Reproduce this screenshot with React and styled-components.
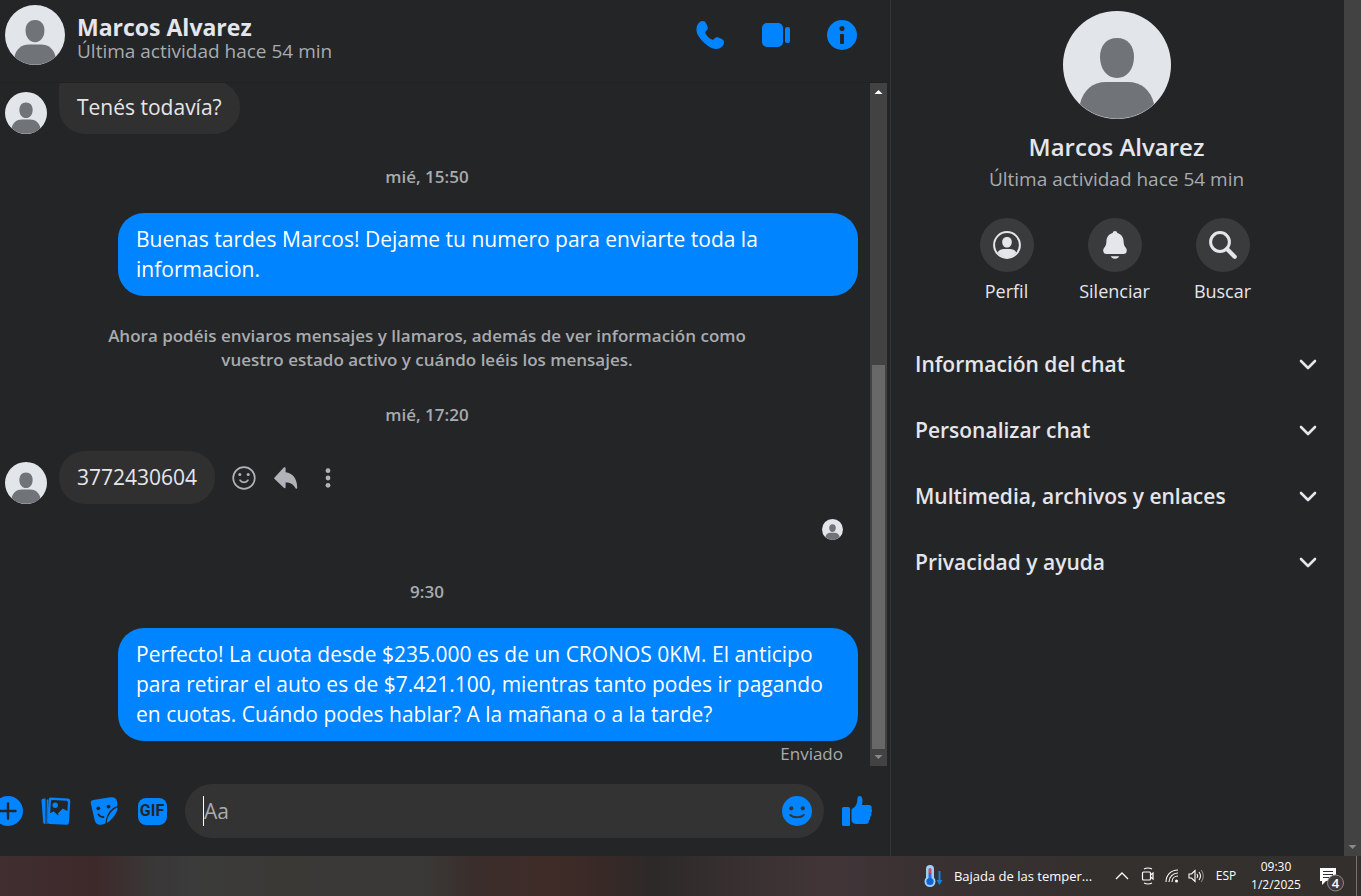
import React from "react";
import styled, { createGlobalStyle } from "styled-components";

const GlobalStyle = createGlobalStyle`
  * {
    box-sizing: border-box;
  }

  body {
    margin: 0;
    background: #242526;
    color: #e4e6eb;
    font-family: "Open Sans", "Noto Sans", sans-serif;
  }

  button, input {
    font-family: inherit;
    color: inherit;
    border: 0;
    padding: 0;
    background: none;
  }

  button {
    cursor: pointer;
  }

  h1, h2, p {
    margin: 0;
  }

  svg {
    display: block;
    flex: none;
  }
`;

const Page = styled.div`
  display: flex;
  flex-direction: column;
  height: 100vh;
  overflow: hidden;
`;

const Main = styled.main`
  display: flex;
  flex: 1;
  min-height: 0;
`;

const Chat = styled.section`
  display: flex;
  flex-direction: column;
  flex: 1;
  min-width: 0;
  overflow: hidden;
  border-right: 1px solid #343536;
`;

const Header = styled.header`
  display: flex;
  align-items: flex-start;
  justify-content: space-between;
  padding: 5px 27px 17px 5px;
  border-bottom: 1px solid #202122;
`;

const Contact = styled.div`
  display: flex;
  align-items: center;
  gap: 12px;
`;

const ContactText = styled.div`
  padding-top: 6px;
`;

const Name = styled.h1`
  font-size: 23px;
  line-height: 26px;
  font-weight: 700;
`;

const Status = styled.p`
  font-size: 19px;
  line-height: 22px;
  color: #a8abaf;
`;

const HeaderActions = styled.div`
  display: flex;
  align-items: center;
  gap: 24px;
  height: 60px;
`;

const IconButton = styled.button`
  display: flex;
  align-items: center;
  justify-content: center;
  flex: none;
  width: ${(props) => props.$size || 42}px;
  height: ${(props) => props.$size || 42}px;
  color: ${(props) => props.$color || "#0084ff"};
`;

const Body = styled.div`
  display: flex;
  flex: 1;
  min-height: 0;
  padding-right: 3px;
`;

const Messages = styled.div`
  display: flex;
  flex-direction: column;
  justify-content: flex-end;
  flex: 1;
  min-width: 0;
  overflow: hidden;
  padding: 0 12px 0 5px;
`;

const Received = styled.div`
  display: flex;
  align-items: flex-end;
  gap: 12px;
`;

const Bubble = styled.p`
  padding: 11px 18px 12px;
  border-radius: ${(props) => (props.$grouped ? "6px 26px 26px 26px" : "26px")};
  background: #303030;
  font-size: 21px;
  line-height: 30px;
`;

const Sent = styled(Bubble)`
  align-self: flex-end;
  width: 740px;
  max-width: 88%;
  background: #0084ff;
  color: #fff;
`;

const MessageActions = styled.div`
  display: flex;
  align-items: center;
  height: 53px;
  margin-left: -4px;
`;

const Time = styled.p`
  margin: 31px 9px 24px 0;
  font-size: 17px;
  line-height: 24px;
  font-weight: 600;
  text-align: center;
  color: #a8abaf;
`;

const Notice = styled(Time)`
  max-width: 650px;
  margin: 28px auto 0;
  padding-right: 9px;
`;

const Seen = styled.div`
  display: flex;
  justify-content: flex-end;
  padding: 15px 15px 9px 0;
`;

const Delivery = styled.p`
  padding-right: 15px;
  font-size: 17px;
  line-height: 25px;
  text-align: right;
  color: #a8abaf;
`;

const ScrollTrack = styled.div`
  display: flex;
  flex-direction: column;
  align-items: center;
  justify-content: space-between;
  flex: none;
  width: 17px;
  background: #424242;
`;

const ScrollThumb = styled.div`
  flex: 1;
  width: 13px;
  margin-top: 265px;
  background: #686868;
`;

const Composer = styled.form`
  display: flex;
  align-items: center;
  margin: 18px 9px 18px -16px;
`;

const Field = styled.div`
  display: flex;
  align-items: center;
  flex: 1;
  min-width: 0;
  height: 54px;
  margin: 0 9px;
  padding: 0 6px 0 18px;
  border-radius: 27px;
  background: #333334;
`;

const TextInput = styled.input`
  flex: 1;
  min-width: 0;
  height: 30px;
  border-left: 1px solid #fff;
  font-size: 21px;
  outline: 0;

  &::placeholder {
    color: #a8abaf;
    opacity: 1;
  }
`;

const Info = styled.aside`
  flex: none;
  width: 453px;
  padding-top: 11px;
`;

const Profile = styled.div`
  display: flex;
  flex-direction: column;
  align-items: center;
  padding-right: 2px;
`;

const ProfileName = styled.h2`
  margin-top: 12px;
  font-size: 24px;
  line-height: 32px;
  font-weight: 600;
`;

const ProfileStatus = styled(Status)`
  line-height: 32px;
`;

const Shortcuts = styled.div`
  display: flex;
  justify-content: center;
  padding: 23px 6px 0 0;
`;

const Shortcut = styled.button`
  display: flex;
  flex-direction: column;
  align-items: center;
  gap: 6px;
  width: 108px;
  font-size: 18px;
  line-height: 26px;
`;

const Round = styled.span`
  display: flex;
  align-items: center;
  justify-content: center;
  width: 54px;
  height: 54px;
  border-radius: 50%;
  background: #3a3b3c;
`;

const Sections = styled.div`
  padding: 27px 27px 0 24px;
`;

const SectionButton = styled.button`
  display: flex;
  align-items: center;
  justify-content: space-between;
  width: 100%;
  height: 66px;
  font-size: 21px;
  line-height: 30px;
  font-weight: 600;
  text-align: left;
`;

const Taskbar = styled.footer`
  display: flex;
  align-items: center;
  justify-content: flex-end;
  flex: none;
  height: 40px;
  background: linear-gradient(
    90deg,
    #402e30 0%,
    #3e292a 7%,
    #3a3737 11%,
    #3a3b3a 14%,
    #3b3936 20%,
    #3a3937 31%,
    #3a2d2b 35%,
    #3f2c28 40%,
    #392926 44%,
    #2d2929 48%,
    #383030 54%,
    #413538 61%,
    #3a3132 67%,
    #34302e 80%,
    #322f2d 100%
  );
  color: #fff;
  font-size: 13px;
  line-height: 18px;
`;

const TrayButton = styled.button`
  display: flex;
  align-items: center;
  justify-content: center;
  gap: ${(props) => props.$gap || 0}px;
  flex: none;
  width: ${(props) => props.$width}px;
  height: 40px;
  font-size: ${(props) => props.$font || 13}px;
  line-height: 18px;
  white-space: nowrap;
`;

const Desktop = styled.button`
  width: 5px;
  height: 40px;
  border-left: 1px solid #77706c;
`;

const Avatar = ({ size }) => (
  <svg width={size} height={size} viewBox="0 0 108 108" role="img" aria-label="Marcos Alvarez">
    <circle cx="54" cy="54" r="54" fill="#e2e5ea" />
    <path
      d="M54 27c11 0 17 8 17 19 0 12-7 21-17 21s-17-9-17-21c0-11 6-19 17-19Z"
      fill="#707378"
    />
    <path
      d="M17 93C20 79 30 71 43 71h22c13 0 23 8 26 22A54 54 0 0 1 17 93Z"
      fill="#707378"
    />
  </svg>
);

const PhoneIcon = () => (
  <svg width="28" height="28" viewBox="0 0 28 28" fill="currentColor">
    <path d="M1 5C2 2 4 0 7 0c1.400 0 2.200.8 3 2.200l1.400 3c.8 1.900.4 3.300-1 4.500-1.200 1-1.400 1.800-.6 3.200 1.200 2.200 3.200 4.200 5.400 5.400 1.400.8 2.200.6 3.200-.6 1.200-1.400 2.600-1.800 4.500-1l3 1.400C27.200 19 28 19.800 28 21.200c0 3-2 5-5 6.200-3 1.100-6.600.4-10.600-2.200C8.600 22.700 5.200 19.400 2.800 15.600.2 11.600 0 8 1 5Z" />
  </svg>
);

const VideoIcon = () => (
  <svg width="28" height="24" viewBox="0 0 28 24" fill="currentColor">
    <rect width="21" height="24" rx="5" />
    <rect x="23" y="4" width="5" height="16" rx="2" />
  </svg>
);

const InfoIcon = () => (
  <svg width="30" height="30" viewBox="0 0 30 30">
    <circle cx="15" cy="15" r="15" fill="currentColor" />
    <circle cx="15" cy="8.500" r="2.500" fill="#242526" />
    <path d="M13.500 14.500h3V23.500h-3Z" fill="#242526" stroke="#242526" strokeLinejoin="round" />
  </svg>
);

const SmileOutline = () => (
  <svg width="24" height="24" viewBox="0 0 24 24" fill="none" stroke="currentColor" strokeLinecap="round">
    <circle cx="12" cy="12" r="10.800" strokeWidth="1.700" />
    <path d="M8 14.200c1.600 2.800 6.400 2.800 8 0" strokeWidth="1.700" />
    <circle cx="7.800" cy="8.500" r="1.500" fill="currentColor" stroke="none" />
    <circle cx="16.200" cy="8.500" r="1.500" fill="currentColor" stroke="none" />
  </svg>
);

const ReplyIcon = () => (
  <svg width="24" height="24" viewBox="0 0 24 24" fill="currentColor">
    <path d="M.6 11.400 9.800 1.600c.8-.8 1.800-.4 1.800.7v3.900c7 .8 11.600 6.400 11.600 15.200 0 1.600-1.300 1.800-2 .4-1.900-3.800-5-5.200-9.600-5.300V21c0 1.200-1 1.600-1.800.8L.6 13c-.6-.6-.6-1 0-1.600Z" />
  </svg>
);

const DotsIcon = () => (
  <svg width="24" height="24" viewBox="0 0 24 24" fill="currentColor">
    <circle cx="12" cy="4.700" r="2.400" />
    <circle cx="12" cy="12" r="2.400" />
    <circle cx="12" cy="19.300" r="2.400" />
  </svg>
);

const PlusIcon = () => (
  <svg width="30" height="30" viewBox="0 0 30 30">
    <circle cx="15" cy="15" r="15" fill="currentColor" />
    <path d="M15 7.500v15M7.500 15h15" stroke="#242526" strokeWidth="2.400" strokeLinecap="round" />
  </svg>
);

const PhotoIcon = () => (
  <svg width="30" height="30" viewBox="0 0 30 30">
    <path d="M.5 4.500Q.4 3 2 2.800L4.600 2.500 4.400 28 3.600 28.100Q2.400 28 2.200 26.600Z" fill="currentColor" />
    <path d="M6.400 3.500 6 28" stroke="currentColor" strokeWidth="1.200" />
    <path
      d="M10 1.600 27 2.600q2.400.2 2.300 2.600L28 26.600q-.2 2.300-2.600 2.200L8.600 28q-2.300-.2-2.200-2.500L7.500 4q.2-2.500 2.500-2.400Z"
      fill="currentColor"
    />
    <path
      d="M9.200 17.200 9.900 5q.1-1.200 1.400-1.100l14.200.8q1.500.1 1.400 1.500L26.400 15l-4.600-2.600-5 5.200 1 1.600-1.600-.4-3.600-3.600Z"
      fill="#242526"
    />
    <circle cx="14.200" cy="9.200" r="2.700" fill="currentColor" />
  </svg>
);

const StickerIcon = () => (
  <svg width="28" height="30" viewBox="0 0 28 30">
    <path
      d="M.8 7.200Q.4 4.400 3.200 3.900L20.500 1.200q6-.6 6.600 4.600l.2 4.400c-6.300 1.400-11.300 8.200-11.800 17.200l-3 1.200q-6.800 1.400-8-5Z"
      fill="currentColor"
    />
    <path d="M27.500 12.600c-.2 3.400-4.400 10.600-9.700 13.800-.8.500-1.200 0-1-.8 1-6 4.800-11.300 9.400-13.500.8-.4 1.400-.3 1.300.5Z" fill="currentColor" />
    <circle cx="8.300" cy="12.300" r="1.900" fill="#242526" />
    <circle cx="18.500" cy="10.600" r="1.900" fill="#242526" />
    <path d="M8.500 18.500c1.400 2 3 2.800 5 2.500" stroke="#242526" strokeWidth="1.800" fill="none" strokeLinecap="round" />
  </svg>
);

const Gif = styled.span`
  display: flex;
  align-items: center;
  justify-content: center;
  width: 29px;
  height: 27px;
  border-radius: 8px;
  background: #0084ff;
  color: #242526;
  font: 700 16px/20px Roboto, sans-serif;
`;

const SmileIcon = () => (
  <svg width="30" height="30" viewBox="0 0 30 30">
    <circle cx="15" cy="15" r="15" fill="currentColor" />
    <circle cx="9.200" cy="12.300" r="2.100" fill="#333334" />
    <circle cx="20.800" cy="12.300" r="2.100" fill="#333334" />
    <path d="M8.200 19c3 3 10.600 3 13.600 0" stroke="#333334" strokeWidth="2" fill="none" strokeLinecap="round" />
  </svg>
);

const LikeIcon = () => (
  <svg width="30" height="30" viewBox="0 0 30 30" fill="currentColor">
    <rect y="11" width="8" height="19" rx="1.500" />
    <path d="M9.500 14.500c0-1.300.6-2 1.700-2.500 3-1.500 4-4.800 4.200-9C15.500 1 16.200 0 17.500 0 20 0 20.600 2.400 20.500 5c-.1 2-.5 3.400-.5 4h7c2.200 0 3.300 2 2.400 3.800 1 1.400.8 3-.3 4.200.7 1.600.3 3-1 4 .3 1.600-.2 2.700-1.200 3.500.2 2-1 3.500-3.200 3.500H15c-3.400 0-5.500-1.500-5.500-4Z" />
  </svg>
);

const ProfileIcon = () => (
  <svg width="28" height="28" viewBox="0 0 28 28">
    <circle cx="14" cy="14" r="12.900" fill="none" stroke="currentColor" strokeWidth="2" />
    <path d="M14 6c3.200 0 4.800 2.300 4.800 5 0 3.100-2 5.600-4.800 5.600S9.200 14.100 9.200 11C9.200 8.300 10.800 6 14 6Z" fill="currentColor" />
    <path d="M4.500 21.500C6.300 18.900 8.500 18 11 18h6c2.500 0 4.700.9 6.500 3.500A12 12 0 0 1 4.500 21.500Z" fill="currentColor" />
  </svg>
);

const BellIcon = () => (
  <svg width="28" height="28" viewBox="0 0 28 28" fill="currentColor">
    <path d="M14 0c1.300 0 2.100.8 2.300 1.900 4 1 6.200 4.200 6.300 8.700.1 3.200.8 4.500 2.200 6.200 1 1.300 1.200 2.300.8 4-.4 1.500-1.500 2.200-3 2.200H5.400c-1.500 0-2.600-.7-3-2.200-.4-1.700-.2-2.700.8-4 1.400-1.700 2.100-3 2.200-6.200C5.500 6.100 7.700 2.900 11.700 1.900 11.900.8 12.700 0 14 0Z" />
    <path d="M9.800 25.200h8.400c-.6 1.600-2 2.500-4.200 2.500s-3.600-.9-4.200-2.500Z" />
  </svg>
);

const SearchIcon = () => (
  <svg width="28" height="28" viewBox="0 0 28 28" fill="none" stroke="currentColor">
    <circle cx="11" cy="11" r="9.400" strokeWidth="3" />
    <path d="m18 18 7.700 7.700" strokeWidth="4.200" strokeLinecap="round" />
  </svg>
);

const ChevronIcon = () => (
  <svg width="18" height="18" viewBox="0 0 18 18" fill="none" stroke="currentColor">
    <path d="m2 6 7 7 7-7" strokeWidth="2.600" strokeLinecap="round" strokeLinejoin="round" />
  </svg>
);

const Arrow = ({ up, color }) => (
  <svg width="17" height="17" viewBox="0 0 17 17" fill={color}>
    <path d={up ? "M4.500 11h8l-4-4Z" : "M4.500 6h8l-4 4Z"} />
  </svg>
);

const ThermometerIcon = () => (
  <svg width="20" height="24" viewBox="0 0 20 24">
    <rect x="2" y="1" width="8" height="17" rx="4" fill="#9bd0f7" />
    <circle cx="6" cy="17.500" r="5.500" fill="#9bd0f7" />
    <rect x="4.500" y="4" width="3" height="6" rx="1.500" fill="#d8456b" />
    <path d="M4.500 9h3v8h-3Z" fill="#3a66d8" />
    <circle cx="6" cy="17.500" r="3.600" fill="#0f63d6" />
    <path d="M15.500 7v11" stroke="#1180e0" strokeWidth="2" />
    <path d="M12.500 16h6l-3 5Z" fill="#1180e0" />
  </svg>
);

const UpIcon = () => (
  <svg width="14" height="14" viewBox="0 0 14 14" fill="none" stroke="#fff" strokeWidth="1.300">
    <path d="m1 10 6-6 6 6" />
  </svg>
);

const MeetIcon = () => (
  <svg width="14" height="18" viewBox="0 0 14 18" fill="none" stroke="#fff" strokeWidth="1.200">
    <rect x="1.500" y="5" width="8" height="8" rx="1" />
    <path d="m9.500 8 2.500-2v6l-2.500-2M3 2q4-2 8 0M3 16q4 2 8 0" />
  </svg>
);

const WifiIcon = () => (
  <svg width="14" height="14" viewBox="0 0 14 14" fill="none" stroke="#fff" strokeWidth="1.100">
    <path d="M1 13C1 6 6 1 13 1M4 13c0-5 4-9 9-9M7 13c0-3.500 2.500-6 6-6" />
    <circle cx="11.500" cy="12" r="1.500" fill="#fff" stroke="none" />
  </svg>
);

const VolumeIcon = () => (
  <svg width="17" height="14" viewBox="0 0 17 14" fill="none" stroke="#fff" strokeWidth="1.100">
    <path d="M1 5h2.500L7 1.500v11L3.500 9H1ZM9 5q1.500 2 0 4M11 3q3 4 0 8" />
    <path d="M13.300 1q4 6 0 12" stroke="#8b8785" />
  </svg>
);

const NoticesIcon = () => (
  <svg width="26" height="34" viewBox="0 -8 26 34">
    <path d="M1 1h16v13H7l-4 4v-4H1Z" fill="#fff" />
    <path d="M4 4.500h10M4 7.500h10M4 10.500h6" stroke="#34302e" strokeWidth="1.200" />
    <circle cx="16.500" cy="16" r="8" fill="#403c3b" stroke="#8d8987" />
    <text x="16.500" y="21" fill="#fff" fontSize="13" fontWeight="600" textAnchor="middle">4</text>
  </svg>
);

const shortcuts = [
  { label: "Perfil", Icon: ProfileIcon },
  { label: "Silenciar", Icon: BellIcon },
  { label: "Buscar", Icon: SearchIcon },
];

const sections = [
  "Información del chat",
  "Personalizar chat",
  "Multimedia, archivos y enlaces",
  "Privacidad y ayuda",
];

const App = () => {
  return (
    <Page>
      <GlobalStyle />
      <Main>
        <Chat>
          <Header>
            <Contact>
              <Avatar size={60} />
              <ContactText>
                <Name>Marcos Alvarez</Name>
                <Status>Última actividad hace 54 min</Status>
              </ContactText>
            </Contact>
            <HeaderActions>
              <IconButton aria-label="Llamar"><PhoneIcon /></IconButton>
              <IconButton aria-label="Videollamada"><VideoIcon /></IconButton>
              <IconButton aria-label="Información"><InfoIcon /></IconButton>
            </HeaderActions>
          </Header>

          <Body>
            <Messages>
              <Received>
                <Avatar size={42} />
                <Bubble $grouped>Tenés todavía?</Bubble>
              </Received>
              <Time>mié, 15:50</Time>
              <Sent>Buenas tardes Marcos! Dejame tu numero para enviarte toda la informacion.</Sent>
              <Notice>
                Ahora podéis enviaros mensajes y llamaros, además de ver información como
                vuestro estado activo y cuándo leéis los mensajes.
              </Notice>
              <Time>mié, 17:20</Time>
              <Received>
                <Avatar size={42} />
                <Bubble>3772430604</Bubble>
                <MessageActions>
                  <IconButton $color="#b0b3b8" aria-label="Reaccionar"><SmileOutline /></IconButton>
                  <IconButton $color="#b0b3b8" aria-label="Responder"><ReplyIcon /></IconButton>
                  <IconButton $color="#b0b3b8" aria-label="Más"><DotsIcon /></IconButton>
                </MessageActions>
              </Received>
              <Seen><Avatar size={21} /></Seen>
              <Time>9:30</Time>
              <Sent>
                Perfecto! La cuota desde $235.000 es de un CRONOS 0KM. El anticipo para retirar el
                auto es de $7.421.100, mientras tanto podes ir pagando en cuotas. Cuándo podes
                hablar? A la mañana o a la tarde?
              </Sent>
              <Delivery>Enviado</Delivery>
            </Messages>
            <ScrollTrack>
              <Arrow up color="#fff" />
              <ScrollThumb />
              <Arrow color="#8a8a8a" />
            </ScrollTrack>
          </Body>

          <Composer onSubmit={(e) => e.preventDefault()}>
            <IconButton type="button" $size={48} aria-label="Más opciones"><PlusIcon /></IconButton>
            <IconButton type="button" $size={48} aria-label="Adjuntar foto"><PhotoIcon /></IconButton>
            <IconButton type="button" $size={48} aria-label="Stickers"><StickerIcon /></IconButton>
            <IconButton type="button" $size={48}><Gif>GIF</Gif></IconButton>
            <Field>
              <TextInput type="text" aria-label="Mensaje" placeholder="Aa" />
              <IconButton type="button" aria-label="Emoji"><SmileIcon /></IconButton>
            </Field>
            <IconButton type="button" $size={48} aria-label="Me gusta"><LikeIcon /></IconButton>
          </Composer>
        </Chat>

        <Info>
          <Profile>
            <Avatar size={108} />
            <ProfileName>Marcos Alvarez</ProfileName>
            <ProfileStatus>Última actividad hace 54 min</ProfileStatus>
          </Profile>
          <Shortcuts>
            {shortcuts.map(({ label, Icon }) => (
              <Shortcut key={label}>
                <Round><Icon /></Round>
                {label}
              </Shortcut>
            ))}
          </Shortcuts>
          <Sections>
            {sections.map((title) => (
              <SectionButton key={title}>
                {title}
                <ChevronIcon />
              </SectionButton>
            ))}
          </Sections>
        </Info>
        <ScrollTrack>
          <span />
          <Arrow color="#8a8a8a" />
        </ScrollTrack>
      </Main>

      <Taskbar>
        <TrayButton $width={200} $gap={10}>
          <ThermometerIcon />
          Bajada de las temper...
        </TrayButton>
        <TrayButton $width={28} aria-label="Iconos ocultos"><UpIcon /></TrayButton>
        <TrayButton $width={24} aria-label="Reunirse"><MeetIcon /></TrayButton>
        <TrayButton $width={24} aria-label="Red"><WifiIcon /></TrayButton>
        <TrayButton $width={24} aria-label="Volumen"><VolumeIcon /></TrayButton>
        <TrayButton $width={36} $font={12}>ESP</TrayButton>
        <TrayButton $width={64} $font={12}>
          <span>
            09:30
            <br />
            1/2/2025
          </span>
        </TrayButton>
        <TrayButton $width={48} aria-label="Notificaciones"><NoticesIcon /></TrayButton>
        <Desktop aria-label="Mostrar escritorio" />
      </Taskbar>
    </Page>
  );
};

export default App;
